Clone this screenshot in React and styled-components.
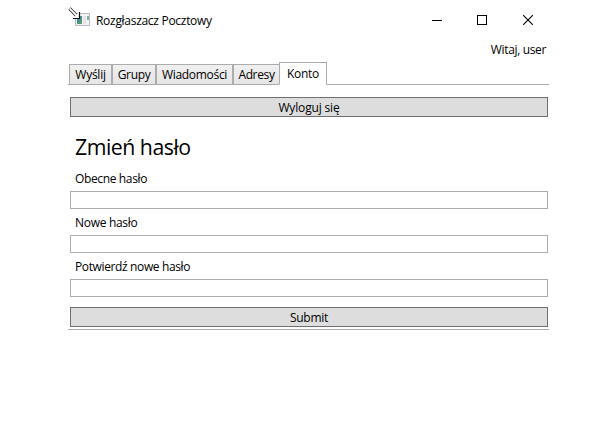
import React from 'react';
import styled, { createGlobalStyle } from 'styled-components';

const GlobalStyle = createGlobalStyle`
  * { box-sizing: border-box; }
  body {
    margin: 0;
    background: #fff;
    color: #000;
    font: 12px/16px "Segoe UI", "Open Sans", "Noto Sans", sans-serif;
  }
`;

const Window = styled.main`
  width: 481px;
  height: 437px;
  margin-left: 68px;
  display: flex;
  flex-direction: column;
`;

const TitleBar = styled.header`
  height: 40px;
  display: flex;
  align-items: flex-start;
`;

const AppIcon = styled.svg`
  width: 24px;
  height: 24px;
  margin-top: 6px;
  flex: none;
`;

const Text = styled.span`
  white-space: nowrap;
  letter-spacing: ${(p) => p.$spacing || 0}px;
`;

const Title = styled(Text)`
  margin: 13px auto 0 4px;
`;

const WindowButtons = styled.div`
  display: flex;
  height: 40px;
  margin-right: -2px;
`;

const WindowButton = styled.button`
  width: ${(p) => p.$width}px;
  height: 40px;
  padding: 0;
  border: 0;
  background: none;
  display: flex;
  justify-content: center;

  svg {
    display: block;
    margin-top: 15px;
  }
`;

const Greeting = styled.div`
  height: 22px;
  padding: 2px 3px 0 0;
  text-align: right;
`;

const TabList = styled.nav`
  height: 23px;
  padding-left: 1px;
  display: flex;
  align-items: flex-end;
  box-shadow: inset 0 -1px #acacac;
`;

const Tab = styled.button`
  width: ${(p) => p.$width}px;
  height: ${(p) => (p.$active ? 23 : 21)}px;
  padding: ${(p) => (p.$active ? '3px 0 0' : '2px 0 0')};
  border: 1px solid #acacac;
  border-bottom-color: ${(p) => (p.$active ? '#fff' : '#acacac')};
  border-right-width: ${(p) => (p.$joined ? 0 : 1)}px;
  background: ${(p) => (p.$active ? '#fff' : 'linear-gradient(#f0f0f0, #e5e5e5)')};
  color: #000;
  font: inherit;
  display: flex;
  justify-content: center;
`;

const Panel = styled.section`
  height: 245px;
  padding: 12px 1px 2px 2px;
  border-bottom: 1px solid #acacac;
  display: flex;
  flex-direction: column;
`;

const Button = styled.button`
  height: 20px;
  width: 478px;
  padding: 1px 0 0;
  border: 1px solid #707070;
  background: #ddd;
  color: #000;
  font: inherit;
  line-height: 16px;
  flex: none;
`;

const SubmitButton = styled(Button)`
  margin-top: auto;
`;

const Heading = styled.h1`
  height: 54px;
  margin: 0;
  padding: 16px 0 0 5px;
  font-size: 21.3px;
  font-weight: 400;
  line-height: 28px;
`;

const Field = styled.label`
  display: flex;
  flex-direction: column;
  height: 44px;
  padding-left: 5px;
`;

const Input = styled.input`
  width: 478px;
  height: 18px;
  margin: 4px 0 0 -5px;
  padding: 0 3px;
  border: 1px solid #abadb3;
  border-radius: 0;
  background: #fff;
  outline: 0;
`;

const tabs = [
  { label: 'Wyślij', width: 43, spacing: -0.25 },
  { label: 'Grupy', width: 44, spacing: -0.35 },
  { label: 'Wiadomości', width: 77, spacing: -0.3 },
  { label: 'Adresy', width: 46, spacing: -0.35, joined: true },
  { label: 'Konto', width: 48, spacing: -0.3, active: true },
];

const fields = [
  { label: 'Obecne hasło', spacing: -0.36 },
  { label: 'Nowe hasło', spacing: -0.3 },
  { label: 'Potwierdź nowe hasło', spacing: -0.37 },
];

export default function App() {
  return (
    <>
      <GlobalStyle />
      <Window>
        <TitleBar>
          <AppIcon viewBox="0 0 24 24" aria-hidden="true">
            <defs>
              <linearGradient id="pane" x1="0" y1="0" x2="1" y2="1">
                <stop offset="0" stopColor="#4279a5" />
                <stop offset="1" stopColor="#55a96b" />
              </linearGradient>
            </defs>
            <path d="M7.5 7.5h14v12h-14z" fill="#f4f4f6" stroke="#b6bac2" />
            <path d="M9 10h5v8H9z" fill="url(#pane)" />
            <path d="M15 10h3v8h-3z" fill="#e2e4e8" />
            <path d="M19 10h2v4h-2z" fill="#7fb09a" />
            <path d="M1.5 2.5l8.5 8.5" stroke="#333" strokeWidth="3.4" />
            <path d="M11 6.5v5.5H5.5z" fill="#fff" />
            <path d="M1.7 2.7l9.3 9.3" stroke="#fff" strokeWidth="1.8" />
            <path d="M11.5 6v6.5H5" fill="none" stroke="#111" strokeWidth="1.2" />
          </AppIcon>
          <Title $spacing={-0.29}>Rozgłaszacz Pocztowy</Title>
          <WindowButtons>
            <WindowButton $width={45} aria-label="Minimize">
              <svg width="11" height="11" shapeRendering="crispEdges">
                <path d="M1 5h10v1H1z" />
              </svg>
            </WindowButton>
            <WindowButton $width={46} aria-label="Maximize">
              <svg width="10" height="10" shapeRendering="crispEdges">
                <path d="M.5.5h9v9h-9z" fill="none" stroke="#000" />
              </svg>
            </WindowButton>
            <WindowButton $width={46} aria-label="Close">
              <svg width="10" height="10">
                <path d="M0 0l10 10M10 0L0 10" stroke="#000" strokeWidth="1.1" />
              </svg>
            </WindowButton>
          </WindowButtons>
        </TitleBar>
        <Greeting>
          <Text $spacing={-0.35}>Witaj, user</Text>
        </Greeting>
        <TabList>
          {tabs.map((tab) => (
            <Tab key={tab.label} $width={tab.width} $active={tab.active} $joined={tab.joined}>
              <Text $spacing={tab.spacing}>{tab.label}</Text>
            </Tab>
          ))}
        </TabList>
        <Panel>
          <Button><Text $spacing={-0.15}>Wyloguj się</Text></Button>
          <Heading><Text $spacing={-0.5}>Zmień hasło</Text></Heading>
          {fields.map((field) => (
            <Field key={field.label}>
              <Text $spacing={field.spacing}>{field.label}</Text>
              <Input type="password" />
            </Field>
          ))}
          <SubmitButton><Text $spacing={-0.25}>Submit</Text></SubmitButton>
        </Panel>
      </Window>
    </>
  );
}
